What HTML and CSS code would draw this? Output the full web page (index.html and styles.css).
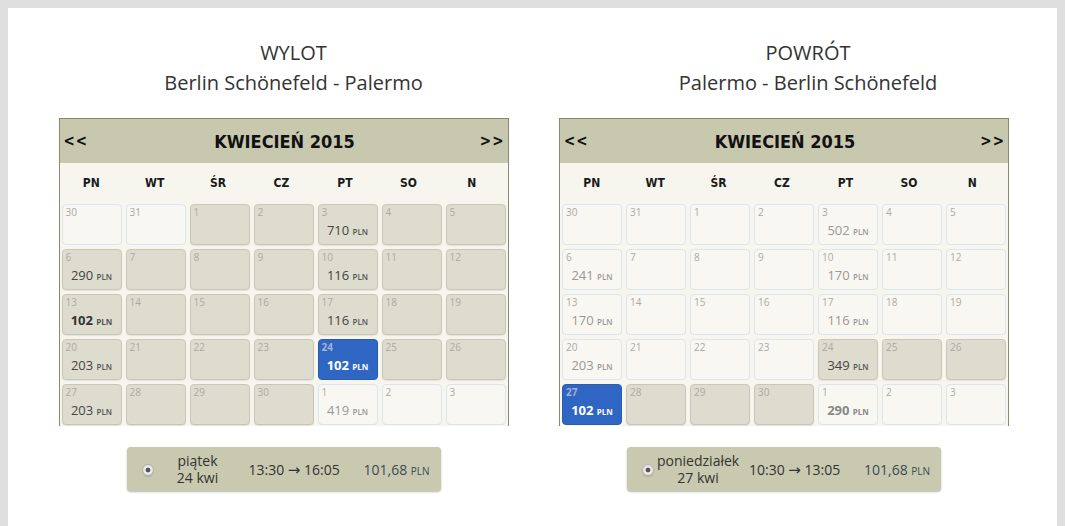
FILE: index.html
```html
<!DOCTYPE html>
<html lang="pl">
<head>
  <meta charset="UTF-8">
  <meta name="viewport" content="width=device-width, initial-scale=1.0">
  <title>Wybór lotu</title>
  <link rel="stylesheet" href="styles.css">
</head>
<body>
  <div class="page">
    <section class="trip trip-out">
      <div class="route">
        <div>WYLOT</div>
        <div>Berlin Schönefeld - Palermo</div>
      </div>
      <div class="calendar-wrap">
        <div class="calendar">
          <div class="cal-head">
            <span class="nav">&lt;&lt;</span>
            <span class="month">KWIECIEŃ 2015</span>
            <span class="nav">&gt;&gt;</span>
          </div>
          <div class="weekdays">
            <span>PN</span><span>WT</span><span>ŚR</span><span>CZ</span><span>PT</span><span>SO</span><span>N</span>
          </div>
          <div class="days" id="outDays"></div>
        </div>
        <div class="flight">
          <span class="radio"></span>
          <span class="flight-date">piątek<br>24 kwi</span>
          <span class="flight-time">13:30 <span class="arrow">→</span> 16:05</span>
          <span class="flight-price">101,68 <small>PLN</small></span>
        </div>
      </div>
    </section>

    <section class="trip trip-return">
      <div class="route">
        <div>POWRÓT</div>
        <div>Palermo - Berlin Schönefeld</div>
      </div>
      <div class="calendar-wrap">
        <div class="calendar">
          <div class="cal-head">
            <span class="nav">&lt;&lt;</span>
            <span class="month">KWIECIEŃ 2015</span>
            <span class="nav">&gt;&gt;</span>
          </div>
          <div class="weekdays">
            <span>PN</span><span>WT</span><span>ŚR</span><span>CZ</span><span>PT</span><span>SO</span><span>N</span>
          </div>
          <div class="days" id="backDays"></div>
        </div>
        <div class="flight">
          <span class="radio"></span>
          <span class="flight-date">poniedziałek<br>27 kwi</span>
          <span class="flight-time">10:30 <span class="arrow">→</span> 13:05</span>
          <span class="flight-price">101,68 <small>PLN</small></span>
        </div>
      </div>
    </section>
  </div>

  <script>
    // dzien|typ|cena|b  (w = poza zakresem, g = dostepny, s = wybrany)
    const wylot = [
      '30|w', '31|w', '1|g', '2|g', '3|g|710', '4|g', '5|g',
      '6|g|290', '7|g', '8|g', '9|g', '10|g|116', '11|g', '12|g',
      '13|g|102|b', '14|g', '15|g', '16|g', '17|g|116', '18|g', '19|g',
      '20|g|203', '21|g', '22|g', '23|g', '24|s|102', '25|g', '26|g',
      '27|g|203', '28|g', '29|g', '30|g', '1|w|419', '2|w', '3|w'
    ];
    const powrot = [
      '30|w', '31|w', '1|w', '2|w', '3|w|502', '4|w', '5|w',
      '6|w|241', '7|w', '8|w', '9|w', '10|w|170', '11|w', '12|w',
      '13|w|170', '14|w', '15|w', '16|w', '17|w|116', '18|w', '19|w',
      '20|w|203', '21|w', '22|w', '23|w', '24|g|349', '25|g', '26|g',
      '27|s|102', '28|g', '29|g', '30|g', '1|w|290|b', '2|w', '3|w'
    ];

    function rysujKalendarz(id, dni) {
      const box = document.getElementById(id);
      dni.forEach(d => {
        const [num, typ, cena, bold] = d.split('|');
        const cell = document.createElement('div');
        cell.className = 'day day-' + typ;
        let html = `<span class="day-num">${num}</span>`;
        if (cena) {
          html += `<span class="day-price${bold ? ' best' : ''}">${cena} <small>PLN</small></span>`;
        }
        cell.innerHTML = html;
        box.appendChild(cell);
      });
    }

    rysujKalendarz('outDays', wylot);
    rysujKalendarz('backDays', powrot);
  </script>
</body>
</html>
```

FILE: styles.css
```css
body {
  margin: 8px 8px 0;
  background-color: #dfdfdf;
  font-family: 'Open Sans', sans-serif;
  color: #333;
}

.page {
  background-color: #ffffff;
  min-height: calc(100vh - 8px);
  display: grid;
  grid-template-columns: 551px 1fr;
  padding-top: 30px;
  box-sizing: border-box;
}

.route {
  text-align: center;
  font-size: 20px;
  line-height: 30px;
  color: #333;
  margin-bottom: 20px;
}

.trip-out .route {
  padding-left: 20px;
}

.calendar-wrap {
  width: 450px;
  margin: 0 auto;
}

.trip-return .calendar-wrap {
  margin: 0;
}

.calendar {
  border: 1px solid #8a896b;
  border-bottom: none;
  background-color: #f6f5ee;
  font-family: 'DejaVu Sans Condensed', 'DejaVu Sans', sans-serif;
}

.cal-head {
  height: 44px;
  background-color: #c8c8ae;
  display: flex;
  align-items: center;
  justify-content: space-between;
  padding: 0 3px 0 4px;
  color: #111;
  font-weight: bold;
}

.month {
  font-size: 18px;
  margin-left: 1px;
}

.nav {
  font-size: 15px;
  letter-spacing: 1px;
}

.weekdays {
  height: 39px;
  display: grid;
  grid-template-columns: repeat(7, 1fr);
  align-items: center;
  padding: 0 4px 0 0;
  font-size: 12px;
  font-weight: bold;
  color: #1a1a1a;
  text-align: center;
}

.days {
  display: grid;
  grid-template-columns: repeat(7, 60px);
  grid-auto-rows: 41px;
  gap: 4px;
  padding: 2px 2px 1px;
  font-family: 'Open Sans', sans-serif;
}

.day {
  box-sizing: border-box;
  border: 1px solid #c9c8b8;
  border-radius: 4px;
  padding: 1px 3px;
  display: flex;
  flex-direction: column;
}

.day-g {
  background-color: #dedcce;
  box-shadow: 0 1px 1px rgba(0, 0, 0, 0.08);
}

.day-w {
  background-color: #f8f7f1;
  border-color: #dbe4ef;
}

.day-s {
  background-color: #2f66c4;
  border-color: #2a5cb2;
}

.day-num {
  font-size: 10px;
  line-height: 13px;
  color: #aaa;
}

.day-s .day-num {
  color: #a3b3cf;
  font-weight: bold;
}

.day-price {
  text-align: center;
  font-size: 13px;
  line-height: 18px;
  margin-top: 2px;
  color: #444;
}

.day-price small {
  font-size: 8px;
  font-weight: 600;
  color: #555;
}

.day-w .day-price,
.day-w .day-price small {
  color: #999;
}

.day-price.best {
  font-weight: bold;
  color: #333;
}

.day-price.best small {
  font-weight: bold;
}

.day-w .day-price.best,
.day-w .day-price.best small {
  color: #888;
}

.day-s .day-price,
.day-s .day-price small {
  color: #ffffff;
  font-weight: bold;
}

.flight {
  width: 314px;
  height: 44px;
  margin: 21px auto 0;
  box-sizing: border-box;
  background-color: #c9c9af;
  border-radius: 4px;
  box-shadow: 0 1px 2px rgba(0, 0, 0, 0.3);
  display: flex;
  align-items: center;
  padding-left: 15px;
  font-size: 14px;
  color: #333;
}

.radio {
  width: 12px;
  height: 12px;
  box-sizing: border-box;
  border-radius: 50%;
  border: 1px solid #b3b3a8;
  background: radial-gradient(circle, #555 0, #555 2px, #f0f0f0 2.8px, #d6d6d6 100%);
  box-shadow: 0 1px 1px rgba(0, 0, 0, 0.15);
  flex-shrink: 0;
  margin-top: 2px;
}

.flight-date {
  width: 82px;
  margin-left: 3px;
  text-align: center;
  line-height: 17px;
}

.flight-time {
  width: 115px;
  margin-left: 10px;
}

.arrow {
  font-family: 'DejaVu Sans', sans-serif;
  font-size: 15px;
  line-height: 1;
}

.flight-price {
  color: #3b4a5a;
}

.flight-price small {
  font-size: 10px;
}
```
